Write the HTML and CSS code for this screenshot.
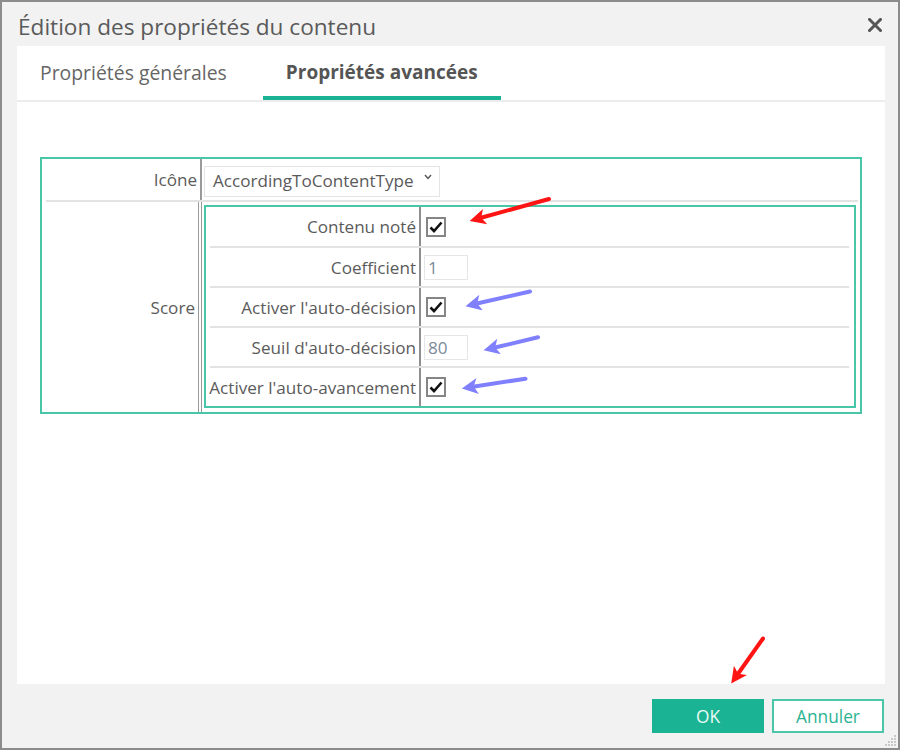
FILE: index.html
```html
<!DOCTYPE html>
<html lang="fr">
<head>
    <meta charset="UTF-8">
    <title>Édition des propriétés du contenu</title>
    <link rel="stylesheet" href="styles.css">
</head>
<body>
    <div class="window">
        <div class="titlebar">
            <span class="title">Édition des propriétés du contenu</span>
            <svg class="close" width="14" height="14" viewBox="0 0 14 14">
                <path d="M1.5 1.5 L12.5 12.5 M12.5 1.5 L1.5 12.5" stroke="#555" stroke-width="3" stroke-linecap="square"/>
            </svg>
        </div>

        <div class="panel">
            <div class="tabs">
                <div class="tab">Propriétés générales</div>
                <div class="tab active">Propriétés avancées</div>
            </div>

            <!-- grille des propriétés -->
            <div class="prop-grid outer">
                <div class="prop-row first">
                    <div class="prop-label">Icône</div>
                    <div class="prop-value">
                        <div class="select">
                            <span>AccordingToContentType</span>
                            <svg width="8" height="6" viewBox="0 0 8 6"><path d="M1 1 L4 4.5 L7 1" fill="none" stroke="#555" stroke-width="1.4"/></svg>
                        </div>
                    </div>
                </div>
                <div class="prop-row">
                    <div class="prop-label double">Score</div>
                    <div class="prop-value nested">
                        <div class="prop-grid inner">
                            <div class="prop-row">
                                <div class="prop-label">Contenu noté</div>
                                <div class="prop-value"><span class="check"></span></div>
                            </div>
                            <div class="prop-row">
                                <div class="prop-label">Coefficient</div>
                                <div class="prop-value"><span class="num">1</span></div>
                            </div>
                            <div class="prop-row">
                                <div class="prop-label">Activer l'auto-décision</div>
                                <div class="prop-value"><span class="check"></span></div>
                            </div>
                            <div class="prop-row">
                                <div class="prop-label">Seuil d'auto-décision</div>
                                <div class="prop-value"><span class="num">80</span></div>
                            </div>
                            <div class="prop-row">
                                <div class="prop-label">Activer l'auto-avancement</div>
                                <div class="prop-value"><span class="check"></span></div>
                            </div>
                        </div>
                    </div>
                </div>
            </div>
        </div>

        <div class="footer">
            <button class="btn ok">OK</button>
            <button class="btn cancel">Annuler</button>
        </div>

        <svg class="grip" width="14" height="14" viewBox="0 0 14 14" fill="#c8c8c8">
            <rect x="11" y="2" width="2" height="2"/>
            <rect x="8" y="5" width="2" height="2"/><rect x="11" y="5" width="2" height="2"/>
            <rect x="5" y="8" width="2" height="2"/><rect x="8" y="8" width="2" height="2"/><rect x="11" y="8" width="2" height="2"/>
            <rect x="2" y="11" width="2" height="2"/><rect x="5" y="11" width="2" height="2"/><rect x="8" y="11" width="2" height="2"/><rect x="11" y="11" width="2" height="2"/>
        </svg>
    </div>

    <!-- flèches d'annotation -->
    <svg class="annotations" width="901" height="751" viewBox="0 0 901 751">
        <defs>
            <marker id="head-red" viewBox="0 0 10 10" refX="2" refY="5" markerWidth="5" markerHeight="4" orient="auto">
                <path d="M0 0 L10 5 L0 10 L2.5 5 Z" fill="#ff1414"/>
            </marker>
            <marker id="head-blue" viewBox="0 0 10 10" refX="2" refY="5" markerWidth="5" markerHeight="4" orient="auto">
                <path d="M0 0 L10 5 L0 10 L2.5 5 Z" fill="#8080ff"/>
            </marker>
        </defs>
        <g stroke-width="4" stroke-linecap="round" fill="none">
            <line x1="549" y1="199" x2="482" y2="217.5" stroke="#ff1414" marker-end="url(#head-red)"/>
            <line x1="530" y1="291.5" x2="478" y2="303.3" stroke="#8080ff" marker-end="url(#head-blue)"/>
            <line x1="538" y1="337.3" x2="496" y2="347.3" stroke="#8080ff" marker-end="url(#head-blue)"/>
            <line x1="525.5" y1="378.7" x2="474.5" y2="386.5" stroke="#8080ff" marker-end="url(#head-blue)"/>
            <line x1="763" y1="638.5" x2="738.6" y2="673" stroke="#ff1414" marker-end="url(#head-red)"/>
        </g>
    </svg>
</body>
</html>
```

FILE: styles.css
```css
* {
    box-sizing: border-box;
}
body {
    margin: 0;
    background-color: #fff;
    font-family: "Open Sans", "Noto Sans", sans-serif;
    color: #5b5b5b;
}

.window {
    position: relative;
    width: 900px;
    height: 750px;
    border: 2px solid #8c8c8c;
    background-color: #f2f2f2;
    display: flex;
    flex-direction: column;
}

/* barre de titre */
.titlebar {
    height: 44px;
    padding: 0 16px 0 16px;
    display: flex;
    align-items: center;
    justify-content: space-between;
}
.title {
    font-size: 22.6px;
    color: #5a5a5a;
    padding-top: 4px;
}
.close {
    margin-top: 2px;
    margin-right: 0;
}

/* panneau blanc */
.panel {
    height: 638px;
    margin: 0 13px 0 15px;
    background-color: #fff;
}
.tabs {
    display: flex;
    gap: 13px;
    border-bottom: 2px solid #ececec;
}
.tab {
    height: 54px;
    padding: 0 23px;
    font-size: 19.4px;
    color: #666;
    display: flex;
    align-items: center;
    border-bottom: 4px solid transparent;
    padding-top: 2px;
}
.tab.active {
    font-size: 19px;
    font-weight: bold;
    color: #555;
    border-bottom-color: #1ab394;
}

/* grille des propriétés */
.prop-grid {
    border: 2px solid #48c6a8;
    font-size: 17.1px;
}
.prop-grid.outer {
    margin: 55px 23px 0;
}
.prop-row {
    display: flex;
}
.prop-row + .prop-row {
    border-top: 2px solid #e3e3e3;
}
.outer > .prop-row {
    margin: 0 2px 0 4px;
}
.outer > .prop-row.first {
    height: 41px;
}
.prop-label {
    flex: none;
    white-space: nowrap;
    display: flex;
    align-items: center;
    justify-content: flex-end;
    padding-right: 3px;
}
.outer > .prop-row > .prop-label {
    width: 156px;
    border-right: 2px solid #9a9a9a;
}
.outer > .prop-row > .prop-label.double {
    border-right: 4px double #9a9a9a;
}
.prop-value {
    flex: 1;
    display: flex;
    align-items: center;
    padding-left: 3px;
}
.outer .prop-row.first .prop-value {
    padding-left: 2px;
    padding-top: 3px;
}
.prop-value.nested {
    padding: 3px 2px 4px 2px;
    display: block;
}

.inner > .prop-row {
    height: 40px;
    margin: 0 5px 0 4px;
}
.inner > .prop-row:first-child {
    height: 39px;
}
.inner .prop-label {
    width: 211px;
    border-right: 2px solid #8f8f8f;
}

.select {
    width: 236px;
    height: 31px;
    border: 1px solid #e4e4e4;
    padding: 0 7px 2px 8px;
    display: flex;
    align-items: center;
    justify-content: space-between;
    color: #5a5a5a;
}
.select svg {
    margin-bottom: 6px;
}

.check {
    width: 20px;
    height: 20px;
    margin-left: 2px;
    border: 2px solid #858585;
    background: #fff url("data:image/svg+xml,%3Csvg xmlns='http://www.w3.org/2000/svg' width='16' height='16' viewBox='0 0 16 16'%3E%3Cpath d='M2.5 8.5 L6 12 L13.5 3.5' fill='none' stroke='%23111' stroke-width='2.6'/%3E%3C/svg%3E") center / 16px 16px no-repeat;
}
.num {
    width: 44px;
    height: 25px;
    border: 1px solid #e6e6e6;
    padding-left: 3px;
    color: #7b8a98;
    display: flex;
    align-items: center;
}

/* boutons */
.footer {
    flex: 1;
    display: flex;
    justify-content: flex-end;
    align-items: flex-start;
    gap: 8px;
    padding: 15px 14px 0 0;
}
.btn {
    width: 112px;
    height: 34px;
    font-family: "Open Sans", "Noto Sans", sans-serif;
    font-size: 17.3px;
    cursor: pointer;
}
.btn.ok {
    background-color: #1ab394;
    border: none;
    color: #eafaf5;
}
.btn.cancel {
    background-color: #fff;
    border: 2px solid #4cc6a9;
    color: #2bb393;
}

.grip {
    position: absolute;
    right: 1px;
    bottom: 1px;
}
.annotations {
    position: absolute;
    top: 0;
    left: 0;
    pointer-events: none;
}
```
